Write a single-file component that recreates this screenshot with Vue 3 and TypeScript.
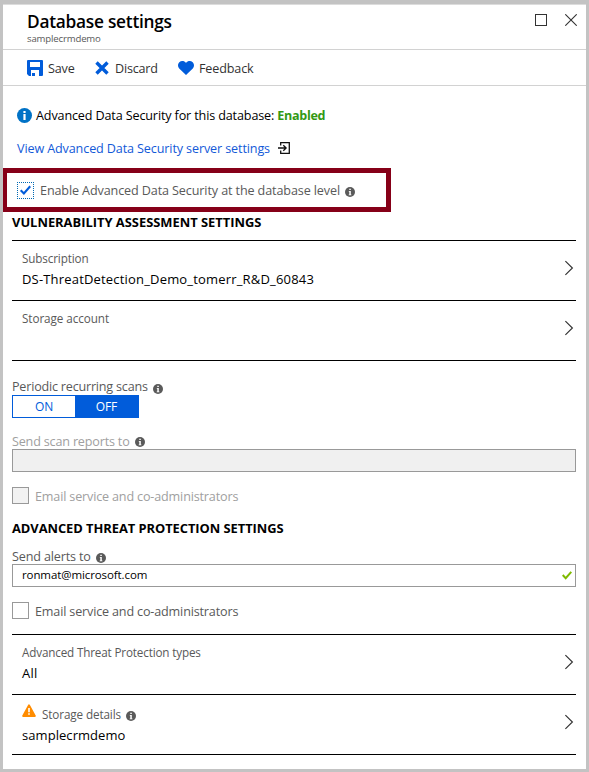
<script setup lang="ts">
import { h, ref } from 'vue'

const scans = ref<'ON' | 'OFF'>('OFF')
const alertEmail = ref('ronmat@microsoft.com')

const InfoDot = () =>
  h('svg', { class: 'dot', width: 10, height: 10, viewBox: '0 0 10 10' }, [
    h('circle', { cx: 5, cy: 5, r: 5, fill: '#5a5a5a' }),
    h('path', { d: 'M4.3 1.7h1.5v1.4H4.3zM3.8 4h2v3.4h.6v.8H3.7v-.8h.6V4.8h-.5z', fill: '#fff' }),
  ])

const Chevron = () =>
  h('svg', { class: 'chevron', width: 10, height: 16, viewBox: '0 0 10 16' }, [
    h('path', { d: 'M1.4 1.2L8.4 8L1.4 14.8', fill: 'none', stroke: '#333', 'stroke-width': 1.15 }),
  ])
</script>

<template>
  <main class="frame">
    <section class="blade">
      <header class="head">
        <div>
          <h1>Database settings</h1>
          <p class="sub">samplecrmdemo</p>
        </div>
        <div class="window">
          <svg width="12" height="12" viewBox="0 0 12 12"><rect x=".5" y=".5" width="11" height="11" fill="none" stroke="#333" /></svg>
          <svg width="12" height="12" viewBox="0 0 12 12"><path d="M.3.3l11.4 11.4M11.7.3L.3 11.7" stroke="#333" stroke-width="1.1" /></svg>
        </div>
      </header>

      <nav class="tools">
        <button class="tool save">
          <svg width="16" height="16" viewBox="0 0 16 16"><path fill="#015cda" fill-rule="evenodd" d="M1 0h14a1 1 0 0 1 1 1v14a1 1 0 0 1-1 1H2L0 14V1a1 1 0 0 1 1-1zM3 2v5h10V2zM4 10v6h1v-3h3v3h4v-6z" /></svg>
          <span>Save</span>
        </button>
        <button class="tool discard">
          <svg width="14" height="14" viewBox="0 0 14 14"><path d="M1.500 1.500l11 11M12.500 1.500l-11 11" stroke="#015cda" stroke-width="3.400" /></svg>
          <span>Discard</span>
        </button>
        <button class="tool feedback">
          <svg width="16" height="14" viewBox="0 0 16 14"><path fill="#015cda" d="M8 14L1.200 7.400C-.5 5.600-.3 2.800 1.300 1.200 3.200-.5 6.300-.4 8 2c1.700-2.400 4.800-2.500 6.700-.8 1.600 1.600 1.800 4.400.1 6.200z" /></svg>
          <span>Feedback</span>
        </button>
      </nav>

      <div class="content">
        <div class="status">
          <svg width="15" height="15" viewBox="0 0 15 15"><circle cx="7.500" cy="7.500" r="7.500" fill="#0072c6" /><path fill="#fff" d="M6.400 3h2.200v2H6.400zM6.400 6h2.200v6H6.400z" /></svg>
          <span class="status-text">Advanced Data Security for this database:</span>
          <strong>Enabled</strong>
        </div>

        <a class="link">
          <span>View Advanced Data Security server settings</span>
          <svg width="12" height="12" viewBox="0 0 12 12" fill="none" stroke="#111" stroke-width="1.300"><path d="M2.700 3.500V.7h8.600v10.600H2.700V8.500M0 6h7.800M5.300 3.200L8.100 6 5.300 8.800" /></svg>
        </a>

        <div class="highlight">
          <span class="box focused"><svg width="13" height="11" viewBox="0 0 13 11"><path d="M1.700 5.200l3.200 3.300L11.200 1.200" fill="none" stroke="#015cda" stroke-width="2.100" /></svg></span>
          <span class="enable">Enable Advanced Data Security at the database level</span>
          <InfoDot />
        </div>

        <h2 class="vulnerability">VULNERABILITY ASSESSMENT SETTINGS</h2>
        <div class="rows">
          <div class="row">
            <div><p class="key">Subscription</p><p class="value wide">DS-ThreatDetection_Demo_tomerr_R&amp;D_60843</p></div>
            <Chevron />
          </div>
          <div class="row">
            <div><p class="key account">Storage account</p></div>
            <Chevron />
          </div>
        </div>

        <div class="label periodic"><span>Periodic recurring scans</span><InfoDot /></div>
        <div class="toggle">
          <button :class="{ on: scans === 'ON' }" @click="scans = 'ON'">ON</button>
          <button :class="{ on: scans === 'OFF' }" @click="scans = 'OFF'">OFF</button>
        </div>

        <div class="label reports"><span>Send scan reports to</span><InfoDot /></div>
        <input class="field" disabled />
        <div class="check muted"><span class="box"></span><span class="check-text">Email service and co-administrators</span></div>

        <h2 class="threat">ADVANCED THREAT PROTECTION SETTINGS</h2>
        <div class="label alerts"><span>Send alerts to</span><InfoDot /></div>
        <div class="field email">
          <input v-model="alertEmail" spellcheck="false" />
          <svg width="10" height="9" viewBox="0 0 10 9"><path d="M.7 4l3 3.200L9.300.8" fill="none" stroke="#7fba00" stroke-width="2" /></svg>
        </div>
        <div class="check"><span class="box"></span><span class="check-text">Email service and co-administrators</span></div>

        <div class="rows last">
          <div class="row">
            <div><p class="key types">Advanced Threat Protection types</p><p class="value all">All</p></div>
            <Chevron />
          </div>
          <div class="row">
            <div>
              <p class="key details">
                <svg class="warn" width="14" height="13" viewBox="0 0 14 13"><path d="M7 1.200L12.900 12H1.100z" fill="#ff8c00" stroke="#ff8c00" stroke-width="1.800" stroke-linejoin="round" /><path d="M6.200 4h1.600v4.200H6.200zM6.200 9.200h1.600v1.600H6.200z" fill="#fff" /></svg>
                <span>Storage details</span><InfoDot />
              </p>
              <p class="value name">samplecrmdemo</p>
            </div>
            <Chevron />
          </div>
        </div>
      </div>
    </section>
  </main>
</template>

<style>
body { margin: 0; }
</style>

<style scoped>
* { box-sizing: border-box; }
.frame {
  height: 772px;
  padding: 4px 3px 3px;
  background: #c3c3c3;
  font-family: "Open Sans", "Noto Sans", sans-serif;
  font-size: 12.6px;
  letter-spacing: -.14px;
  color: #000;
}
.blade { height: 765px; background: #fff; border-top: 1px solid #dcdcdc; }
svg { display: block; flex: none; }
h1, h2, p { margin: 0; white-space: nowrap; }
button { font: inherit; letter-spacing: inherit; border: 0; padding: 0; background: none; }

.head { display: flex; justify-content: space-between; height: 45px; padding: 5px 9px 0 24px; border-bottom: 1px solid #d2d2d2; }
h1 { font-size: 17.3px; font-weight: 600; line-height: 24px; letter-spacing: -.25px; }
.sub { font-size: 9.6px; line-height: 10px; letter-spacing: -.16px; color: #595959; }
.window { display: flex; gap: 18px; padding-top: 4px; }

.tools { display: flex; align-items: center; height: 36px; padding-left: 24px; border-bottom: 1px solid #d2d2d2; color: #333; }
.tool { display: flex; align-items: center; color: inherit; }
.save { width: 68px; gap: 5px; }
.discard { width: 83px; gap: 6px; letter-spacing: -.2px; }
.feedback { gap: 5px; }
.tool span { padding-top: 1px; }

.content { padding: 0 10px 0 9px; }
.status { display: flex; align-items: center; height: 20px; margin-top: 19px; padding-left: 5px; }
.status-text { margin: 0 3px 0 4px; }
.status strong { color: #339914; letter-spacing: -.3px; }
.link { display: flex; align-items: center; gap: 8px; height: 20px; margin-top: 13px; padding-left: 5px; color: #1259d8; letter-spacing: -.125px; }

.highlight { display: flex; align-items: center; width: 388px; height: 44px; margin: 10px 0 0 -9px; padding-left: 10px; border: 5px solid #860018; border-left-width: 4px; color: #595959; }
.enable { margin: 0 5px 0 6px; letter-spacing: -.12px; }
.highlight .dot { margin-top: 4px; }
.box { display: flex; align-items: center; justify-content: center; flex: none; width: 17px; height: 17px; border: 1px solid #999; background: #fff; }
.focused { border: 1px dotted #0069b4; }

h2 { font-size: 12.9px; font-weight: 700; line-height: 20px; }
.vulnerability { height: 28px; letter-spacing: 0; }

.rows { border-top: 1px solid #000; }
.row { display: flex; justify-content: space-between; height: 60px; padding: 9px 2px 0 10px; border-bottom: 1px solid #000; }
.chevron { margin-top: 10px; }
.key { height: 18px; font-size: 11.7px; line-height: 17px; color: #595959; }
.account { letter-spacing: -.07px; }
.types { letter-spacing: -.16px; }
.value { font-size: 13px; line-height: 20px; margin-top: 1px; }
.wide { letter-spacing: .18px; }
.all { letter-spacing: .2px; }
.name { letter-spacing: .06px; margin-top: 3px; }
.details { display: flex; align-items: flex-start; letter-spacing: -.11px; }
.details span { padding: 2px 5px 0 6px; }
.details .dot { margin-top: 7px; }

.label { display: flex; align-items: center; gap: 5px; height: 18px; color: #595959; }
.label .dot { margin-top: 4px; }
.periodic { margin-top: 16px; letter-spacing: -.21px; }
.periodic .dot { margin-top: 5px; }
.toggle { display: grid; grid-template-columns: 62px 63px; width: 127px; height: 23px; border: 1px solid #015cda; }
.toggle button { font-size: 12px; line-height: 21px; letter-spacing: -.1px; color: #015cda; }
.toggle .on { color: #fff; background: #015cda; }
.reports { margin-top: 13px; color: #a0a0a0; letter-spacing: -.18px; }
.reports span, .alerts span { padding-top: 2px; }
.field { display: flex; align-items: center; width: 100%; height: 23px; border: 1px solid #999; background: #fff; }
.field:disabled { background: #f0f0f0; }
.check { display: flex; align-items: center; gap: 6px; height: 17px; margin-top: 15px; color: #595959; letter-spacing: -.165px; }
.check-text { padding-top: 2px; }
.muted { color: #a0a0a0; }
.muted .box { background: #f2f2f2; }
.threat { height: 29px; margin-top: 14px; letter-spacing: -.05px; }
.alerts { height: 17px; letter-spacing: -.16px; }
.email { justify-content: space-between; padding: 0 3px 0 9px; }
.email input { width: 300px; height: 20px; padding: 0 0 2px; border: 0; outline: 0; background: none; font: 11.5px "Open Sans", sans-serif; letter-spacing: -.1px; color: #000; }
.last { margin-top: 15px; }
</style>
